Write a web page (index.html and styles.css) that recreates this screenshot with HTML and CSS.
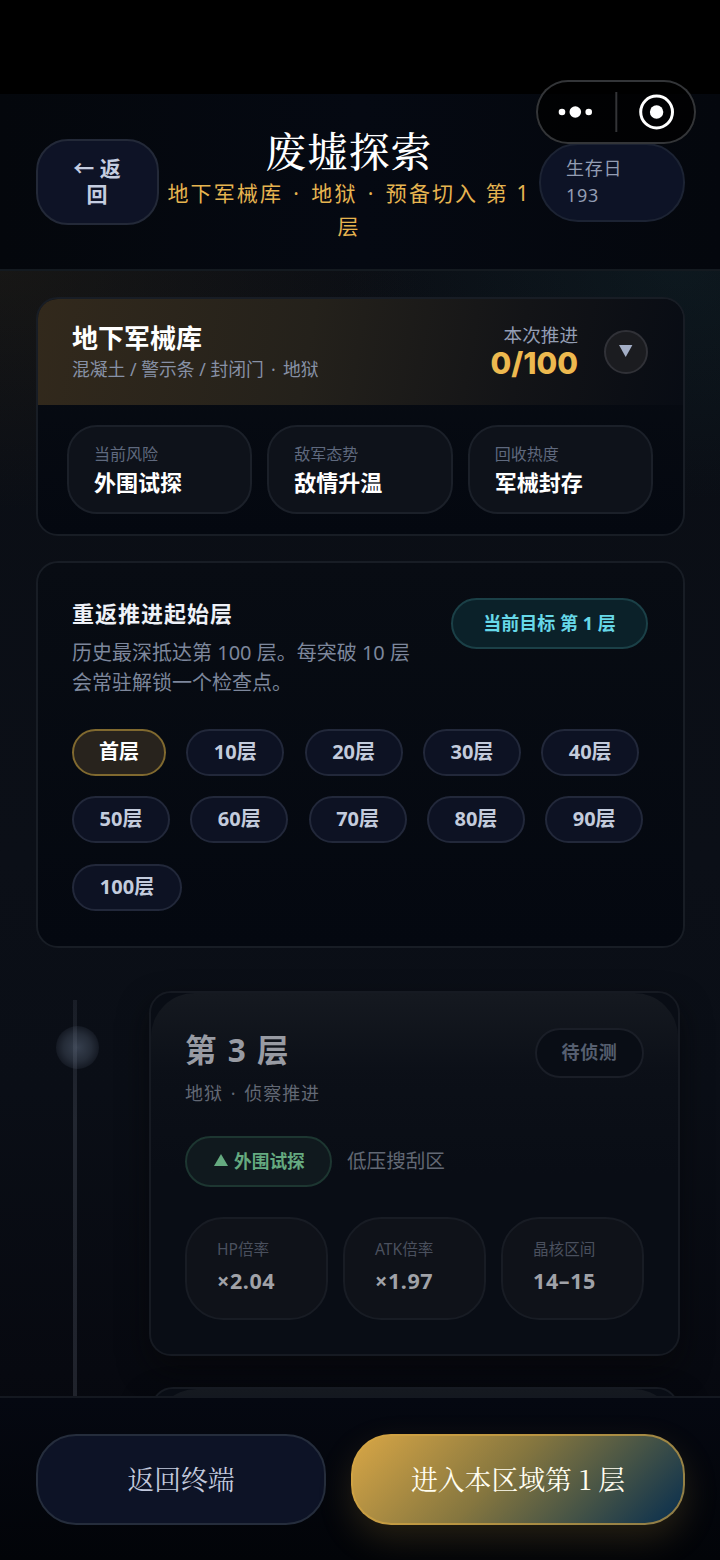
FILE: index.html
```html
<!DOCTYPE html>
<html lang="zh-CN">
<head>
<meta charset="utf-8">
<title>废墟探索</title>
<link rel="stylesheet" href="styles.css">
</head>
<body>
<div class="screen">
  <div class="status"></div>
  <header class="header">
    <button class="back">← 返<br>回</button>
    <div class="heading">
      <h1 class="page-title">废墟探索</h1>
      <p class="page-sub">地下军械库 <i class="dot">·</i> 地狱 <i class="dot">·</i> 预备切入 第 1<br>层</p>
    </div>
    <div class="days"><span>生存日</span><span>193</span></div>
  </header>

  <main class="content">
    <section class="card zone">
      <div class="zone-head">
        <div class="zone-info">
          <h2 class="zone-title">地下军械库</h2>
          <p class="zone-tags">混凝土 / 警示条 / 封闭门 <i class="dot">·</i> 地狱</p>
        </div>
        <div class="progress">
          <span class="progress-label">本次推进</span>
          <strong class="progress-value">0/100</strong>
        </div>
        <div class="toggle"><svg width="14" height="12" viewBox="0 0 14 12"><path d="M0 0H13.4L6.7 12Z" fill="#a3aec6"/></svg></div>
      </div>
      <div class="zone-stats">
        <div class="stat"><span class="stat-label">当前风险</span><b class="stat-value">外围试探</b></div>
        <div class="stat"><span class="stat-label">敌军态势</span><b class="stat-value">敌情升温</b></div>
        <div class="stat"><span class="stat-label">回收热度</span><b class="stat-value">军械封存</b></div>
      </div>
    </section>

    <section class="card start">
      <div class="start-head">
        <div>
          <h3 class="start-title">重返推进起始层</h3>
          <p class="start-desc">历史最深抵达第 100 层。每突破 10 层<br>会常驻解锁一个检查点。</p>
        </div>
        <div class="target">当前目标 第 1 层</div>
      </div>
      <div class="chips">
        <span class="chip chip-active">首层</span>
        <span class="chip">10层</span>
        <span class="chip">20层</span>
        <span class="chip">30层</span>
        <span class="chip">40层</span>
        <span class="chip">50层</span>
        <span class="chip">60层</span>
        <span class="chip">70层</span>
        <span class="chip">80层</span>
        <span class="chip">90层</span>
        <span class="chip chip-wide">100层</span>
      </div>
    </section>

    <section class="timeline">
      <div class="rail"><i class="rail-dot"></i><i class="rail-line"></i></div>
      <div class="floors">
        <article class="floor">
          <div class="floor-head">
            <div>
              <h3 class="floor-title">第 3 层</h3>
              <p class="floor-sub">地狱 <i class="dot">·</i> 侦察推进</p>
            </div>
            <div class="pending">待侦测</div>
          </div>
          <div class="risk-row">
            <span class="risk"><svg width="14" height="12" viewBox="0 0 14 12"><path d="M7 0L14 12H0Z" fill="currentColor"/></svg>外围试探</span>
            <span class="risk-note">低压搜刮区</span>
          </div>
          <div class="floor-stats">
            <div class="fstat"><span class="fstat-label">HP倍率</span><b class="fstat-value">×2.04</b></div>
            <div class="fstat"><span class="fstat-label">ATK倍率</span><b class="fstat-value">×1.97</b></div>
            <div class="fstat"><span class="fstat-label">晶核区间</span><b class="fstat-value">14–15</b></div>
          </div>
        </article>
        <article class="floor"></article>
      </div>
    </section>
  </main>

  <footer class="footer">
    <button class="btn btn-back">返回终端</button>
    <button class="btn btn-enter">进入本区域第 1 层</button>
  </footer>

  <div class="capsule">
    <svg width="160" height="64" viewBox="0 0 160 64">
      <g fill="#fff"><circle cx="26" cy="32" r="3.3"/><circle cx="39.3" cy="32" r="5.8"/><circle cx="52.7" cy="32" r="3.3"/><circle cx="120.6" cy="32" r="6.7"/></g>
      <circle cx="120.6" cy="32" r="15.9" fill="none" stroke="#fff" stroke-width="3"/>
      <path d="M80.3 12V52" stroke="#333437" stroke-width="2"/>
    </svg>
  </div>
</div>
</body>
</html>
```

FILE: styles.css
```css
* { box-sizing: border-box; margin: 0; padding: 0; }
body {
  width: 720px; height: 1560px; overflow: hidden; background: #000;
  font-family: "Noto Sans", "Noto Sans CJK SC", sans-serif;
  color: #fff; white-space: nowrap;
}
button { font: inherit; color: inherit; white-space: nowrap; }
.dot { font-style: normal; margin: 0 .13em; }
.screen {
  position: relative; display: flex; flex-direction: column;
  width: 720px; height: 1560px; overflow: hidden;
  background:
    radial-gradient(420px 240px at 0 270px, rgba(60, 48, 24, .26), transparent),
    radial-gradient(340px 230px at 680px 270px, rgba(24, 66, 72, .2), transparent),
    linear-gradient(#0a0d13, #0b0f17 55%, #0a0e16 70%, #070910 88%, #04060a);
}
.status { flex: none; height: 94px; background: #000; }

.header {
  flex: none; display: flex; align-items: flex-start; height: 177px;
  padding: 0 35px 0 36px; background: linear-gradient(90deg, #04070c, #050912 50%, #04070d);
  border-bottom: 2px solid #141a20;
}
.back {
  width: 123px; height: 86px; margin-top: 45px; padding: 0 1px 3px 0;
  border: 2px solid #232938; border-radius: 32px; background: #0e1326;
  font-size: 21px; font-weight: 600; line-height: 26px; color: #c5cde0;
}
.heading { width: 380px; margin-top: 31px; text-align: center; }
.page-title {
  font-family: "Noto Serif CJK SC", "Source Han Serif SC", "Noto Serif SC", "Liberation Serif", "Noto Sans CJK SC", serif;
  font-size: 40.5px; font-weight: 500; letter-spacing: 1.2px; line-height: 50px;
}
.page-sub { margin-top: 2px; font-size: 21px; line-height: 33px; letter-spacing: 2.1px; color: #e6b450; }
.days {
  display: flex; flex-direction: column; width: 146px; height: 79px; margin-top: 49px;
  padding: 10px 0 0 25px; border: 2px solid #1c2333; border-radius: 39px; background: #0d1326;
  font-size: 18px; line-height: 27px; letter-spacing: .7px; color: #939db3;
}

.content { flex: 1; min-height: 0; overflow: hidden; padding: 26px 35px 0 36px; }
.card { border: 2px solid #181d25; border-radius: 22px; background: linear-gradient(#080c13, #040810); }

.zone { height: 239px; overflow: hidden; }
.zone-head {
  display: flex; height: 106px; padding: 0 35px 0 34px;
  background: linear-gradient(100deg, #32291c, #24211b 42%, #131417 74%, #080c14);
}
.zone-info { flex: 1; padding-top: 21px; }
.zone-title { font-size: 26px; font-weight: 700; line-height: 36px; }
.zone-tags { font-size: 17.8px; line-height: 26px; color: #8791a6; }
.zone-tags .dot { margin: 0 .15em; }
.progress { display: flex; flex-direction: column; align-items: flex-end; padding-top: 24px; }
.progress-label { font-size: 18.6px; line-height: 24px; color: #939db3; }
.progress-value {
  font-family: Inter, "Noto Sans", sans-serif; font-size: 30px; font-weight: 800;
  line-height: 32px; color: #edb94f;
}
.toggle {
  display: flex; align-items: center; justify-content: center; width: 44px; height: 44px;
  margin: 31px 0 0 26px; padding-bottom: 2px; border: 2px solid #303137; border-radius: 50%; background: #1b1c20;
}
.zone-stats { display: flex; gap: 15px; padding: 20px 30px 0 29px; }
.stat {
  flex: 1; display: flex; flex-direction: column; height: 89px; padding: 15px 0 0 25px;
  border: 2px solid #1b2029; border-radius: 30px; background: #0e121a;
}
.stat-label { font-size: 16px; line-height: 25px; color: #5f697e; }
.stat-value { font-size: 22px; line-height: 30px; }

.start { height: 387px; margin-top: 25px; padding: 35px 35px 0 34px; }
.start-head { display: flex; justify-content: space-between; }
.start-title { font-size: 22px; font-weight: 700; line-height: 30px; letter-spacing: 1px; color: #eef1f7; }
.start-desc { margin-top: 10px; font-size: 20px; line-height: 30px; color: #7d879c; }
.target {
  width: 197px; height: 51px; border: 2px solid #1b4047; border-radius: 26px; background: #0b2129;
  font-size: 18px; font-weight: 700; line-height: 46px; text-align: center; color: #67d8e8;
}
.chips { display: flex; flex-wrap: wrap; gap: 20.3px; margin-top: 31px; }
.chip {
  width: 98px; height: 47px; border: 2px solid #22283a; border-radius: 24px; background: #0d1223;
  font-size: 20px; font-weight: 700; line-height: 42px; text-align: center; color: #c3cbdc;
}
.chip-active { width: 94px; border-color: #80692f; background: #28231d; color: #fff; }
.chip-wide { width: 110px; }

.timeline { display: flex; margin-top: 43px; }
.rail { position: relative; width: 113px; }
.rail-line {
  position: absolute; left: 37px; top: 9px; width: 4px; height: 600px;
  background: linear-gradient(rgba(130, 138, 156, .12), rgba(130, 138, 156, .2) 120px);
}
.rail-dot {
  position: absolute; left: 20px; top: 35px; width: 43px; height: 43px; border-radius: 50%;
  background: radial-gradient(circle, #363f4e, #252c38 45%, #151a24 70%);
}
.floors { display: flex; flex-direction: column; gap: 31px; width: 531px; }
.floor {
  position: relative; height: 365px; padding: 34px 34px 0 34px;
  border: 2px solid #161a22; border-radius: 22px; background: #090d15;
  box-shadow: 0 14px 30px rgba(6, 7, 8, .6);
}
.floor::before {
  content: ""; position: absolute; inset: 0; border-radius: 44px; pointer-events: none;
  background: linear-gradient(#151920, rgba(14, 18, 26, .5) 22%, rgba(10, 14, 22, 0) 50%);
}
.floor > * { position: relative; }
.floor + .floor { margin: 0 1px 0 2px; }
.floor-head { display: flex; justify-content: space-between; }
.floor-title { font-size: 31.5px; font-weight: 700; line-height: 46px; letter-spacing: 1.5px; color: #989ba3; }
.floor-sub { margin-top: 6px; font-size: 18px; line-height: 28px; letter-spacing: .9px; color: #626874; }
.pending {
  width: 109px; height: 50px; margin-top: 1px; border: 2px solid #1a1e27; border-radius: 25px; background: #090d15;
  font-size: 18px; font-weight: 600; line-height: 45px; letter-spacing: .6px; text-align: center; color: #565f70;
}
.risk-row { display: flex; align-items: center; gap: 15px; margin-top: 29px; }
.risk {
  display: flex; align-items: center; gap: 6px; width: 147px; height: 51px; padding: 0 0 3px 27px;
  border: 2px solid #1d3631; border-radius: 26px; background: #10191e;
  font-size: 17.7px; font-weight: 700; color: #65aa80;
}
.risk-note { padding-bottom: 4px; font-size: 19.6px; color: #626874; }
.floor-stats { display: flex; gap: 15px; margin-top: 30px; }
.fstat {
  flex: 1; display: flex; flex-direction: column; height: 103px; padding: 17px 0 0 30px;
  border: 2px solid #181c24; border-radius: 38px; background: #0f1219;
}
.fstat-label { font-size: 15.6px; line-height: 27px; color: #4a505e; }
.fstat-value { font-size: 21.5px; line-height: 36px; letter-spacing: .6px; color: #a0a2a8; }

.footer {
  flex: none; display: flex; gap: 25px; height: 164px; padding: 36px 35px 0 36px;
  border-top: 2px solid #141820; background: linear-gradient(#050811, #020408);
}
.btn {
  height: 91px; padding-bottom: 3px; border-radius: 40px;
  font-family: "Noto Serif CJK SC", "Source Han Serif SC", "Noto Serif SC", "Liberation Serif", "Noto Sans CJK SC", serif;
  font-size: 26.8px;
}
.btn-back { width: 290px; border: 2px solid #252d3c; background: #0d1326; color: #c2c9dc; }
.btn-enter {
  width: 334px; border: 2px solid rgba(214, 166, 67, .65);
  background: linear-gradient(135deg, #cfa145 6%, #85763f 45%, #455346 72%, #12344d 94%) border-box;
  color: #fffdf0; box-shadow: 0 14px 34px rgba(214, 166, 67, .17);
}

.capsule {
  position: absolute; left: 536px; top: 80px; width: 160px; height: 64px; border-radius: 32px;
  background: rgba(0, 0, 0, .75); box-shadow: inset 0 0 0 2px #333538;
}
.capsule svg { display: block; }
```
